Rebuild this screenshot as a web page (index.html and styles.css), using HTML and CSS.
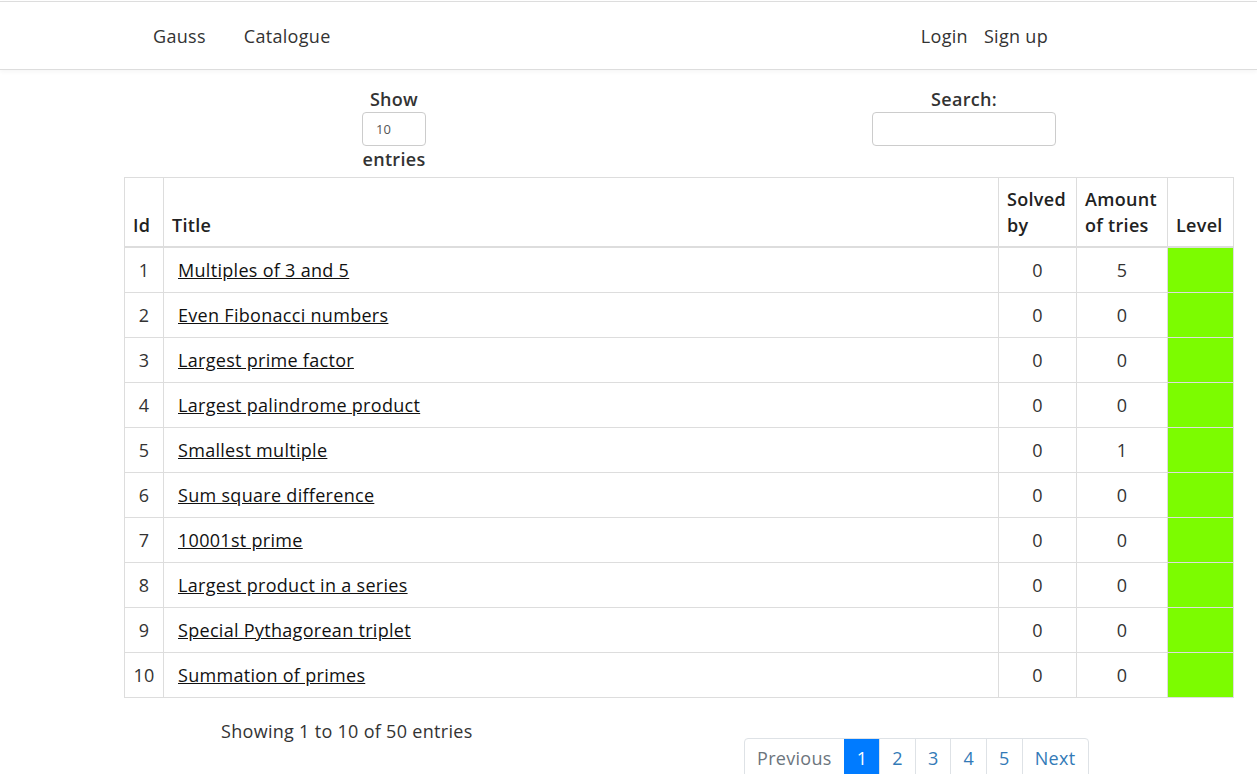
FILE: index.html
```html
<!DOCTYPE html>
<html>
<head>
<meta charset="utf-8">
<link rel="stylesheet" href="styles.css">
</head>
<body>
<nav class="navbar">
  <div class="nav-left">
    <a class="nav-link brand" href="#">Gauss</a>
    <a class="nav-link" href="#">Catalogue</a>
  </div>
  <div class="nav-right">
    <a class="nav-link" href="#">Login</a>
    <a class="nav-link" href="#">Sign up</a>
  </div>
</nav>
<main class="wrap">
  <div class="controls">
    <div class="ctl ctl-length">
      <label class="lbl">Show<br><span class="sel">10</span><br>entries</label>
    </div>
    <div class="ctl ctl-search">
      <label class="lbl">Search:<br><span class="search-box"></span></label>
    </div>
  </div>
  <table class="tbl">
    <thead>
      <tr>
        <th class="c-id">Id</th>
        <th class="c-title">Title</th>
        <th class="c-solved">Solved by</th>
        <th class="c-tries">Amount of tries</th>
        <th class="c-level">Level</th>
      </tr>
    </thead>
    <tbody>
      <tr><td class="num">1</td><td class="t"><a href="#">Multiples of 3 and 5</a></td><td class="num">0</td><td class="num">5</td><td class="lvl"></td></tr>
      <tr><td class="num">2</td><td class="t"><a href="#">Even Fibonacci numbers</a></td><td class="num">0</td><td class="num">0</td><td class="lvl"></td></tr>
      <tr><td class="num">3</td><td class="t"><a href="#">Largest prime factor</a></td><td class="num">0</td><td class="num">0</td><td class="lvl"></td></tr>
      <tr><td class="num">4</td><td class="t"><a href="#">Largest palindrome product</a></td><td class="num">0</td><td class="num">0</td><td class="lvl"></td></tr>
      <tr><td class="num">5</td><td class="t"><a href="#">Smallest multiple</a></td><td class="num">0</td><td class="num">1</td><td class="lvl"></td></tr>
      <tr><td class="num">6</td><td class="t"><a href="#">Sum square difference</a></td><td class="num">0</td><td class="num">0</td><td class="lvl"></td></tr>
      <tr><td class="num">7</td><td class="t"><a href="#">10001st prime</a></td><td class="num">0</td><td class="num">0</td><td class="lvl"></td></tr>
      <tr><td class="num">8</td><td class="t"><a href="#">Largest product in a series</a></td><td class="num">0</td><td class="num">0</td><td class="lvl"></td></tr>
      <tr><td class="num">9</td><td class="t"><a href="#">Special Pythagorean triplet</a></td><td class="num">0</td><td class="num">0</td><td class="lvl"></td></tr>
      <tr><td class="num">10</td><td class="t"><a href="#">Summation of primes</a></td><td class="num">0</td><td class="num">0</td><td class="lvl"></td></tr>
    </tbody>
  </table>
  <div class="footer-row">
    <div class="info">Showing 1 to 10 of 50 entries</div>
    <ul class="pager">
      <li class="pg disabled">Previous</li>
      <li class="pg active">1</li>
      <li class="pg">2</li>
      <li class="pg">3</li>
      <li class="pg">4</li>
      <li class="pg">5</li>
      <li class="pg">Next</li>
    </ul>
  </div>
</main>
</body>
</html>
```
FILE: styles.css
```css
html, body {
  margin: 0;
  padding: 0;
  background: #fff;
}
body {
  font-family: "Open Sans", "Liberation Sans", sans-serif;
  font-size: 18px;
  line-height: 26px;
  letter-spacing: 0.3px;
  color: #333;
  overflow: hidden;
}
.navbar {
  display: flex;
  justify-content: space-between;
  align-items: center;
  height: 67px;
  margin-top: 1px;
  border-top: 1px solid #ddd;
  border-bottom: 1px solid #ddd;
  box-shadow: 0 2px 4px rgba(0,0,0,0.04);
  padding: 0 209px 0 153px;
}
.nav-left, .nav-right {
  display: flex;
  align-items: center;
}
.nav-left { gap: 38px; }
.nav-right { gap: 16px; }
.nav-link {
  color: #333;
  text-decoration: none;
  font-size: 18px;
}
.wrap {
  margin-left: 124px;
  width: 1110px;
}
.controls {
  display: flex;
  padding-top: 17px;
  height: 90px;
}
.ctl {
  text-align: center;
  flex: none;
}
.ctl-length { width: 540px; }
.ctl-search { width: 600px; }
.lbl {
  font-weight: 600;
  display: inline-block;
  line-height: 25px;
}
.sel {
  display: inline-block;
  box-sizing: border-box;
  width: 64px;
  height: 34px;
  border: 1px solid #ccc;
  border-radius: 4px;
  font-size: 13px;
  font-weight: 400;
  letter-spacing: 0;
  color: #555;
  text-align: left;
  padding-left: 13px;
  line-height: 32px;
  vertical-align: top;
  margin-bottom: 1px;
}
.search-box {
  display: inline-block;
  box-sizing: border-box;
  width: 184px;
  height: 34px;
  border: 1px solid #ccc;
  border-radius: 4px;
  vertical-align: top;
}
.tbl {
  width: 1110px;
  border-collapse: collapse;
  table-layout: fixed;
}
.tbl th, .tbl td {
  border: 1px solid #ddd;
  padding: 9px 8px;
}
.tbl th {
  text-align: left;
  vertical-align: bottom;
  font-weight: 600;
  padding: 8px 8px 8px;
  color: #222;
  border-bottom: 2px solid #ddd;
}
.c-id { width: 22px; }
.c-solved { width: 61px; }
.c-tries { width: 74px; }
.c-level { width: 49px; }
.tbl td.num { text-align: center; }
.tbl td.t { padding-left: 14px; }
.tbl td a {
  color: #111;
  text-decoration: underline;
}
.tbl td.lvl {
  background: #7cfc00;
}
.footer-row {
  display: flex;
  align-items: flex-start;
  padding-top: 19px;
}
.info {
  margin-left: 97px;
  width: 523px;
  padding-top: 1px;
}
.pager {
  display: flex;
  list-style: none;
  margin: 21px 0 0 0;
  padding: 0;
  border: 1px solid #dee2e6;
  border-radius: 4px;
  height: 40px;
}
.pg {
  padding: 6px 12px;
  color: #337ab7;
  border-left: 1px solid #dee2e6;
  line-height: 26px;
}
.pg:first-child { border-left: none; }
.pg:last-child { padding-right: 13px; }
.pg.disabled { color: #6c757d; }
.pg.active {
  background: #007bff;
  color: #fff;
  border-color: #007bff;
}
```
